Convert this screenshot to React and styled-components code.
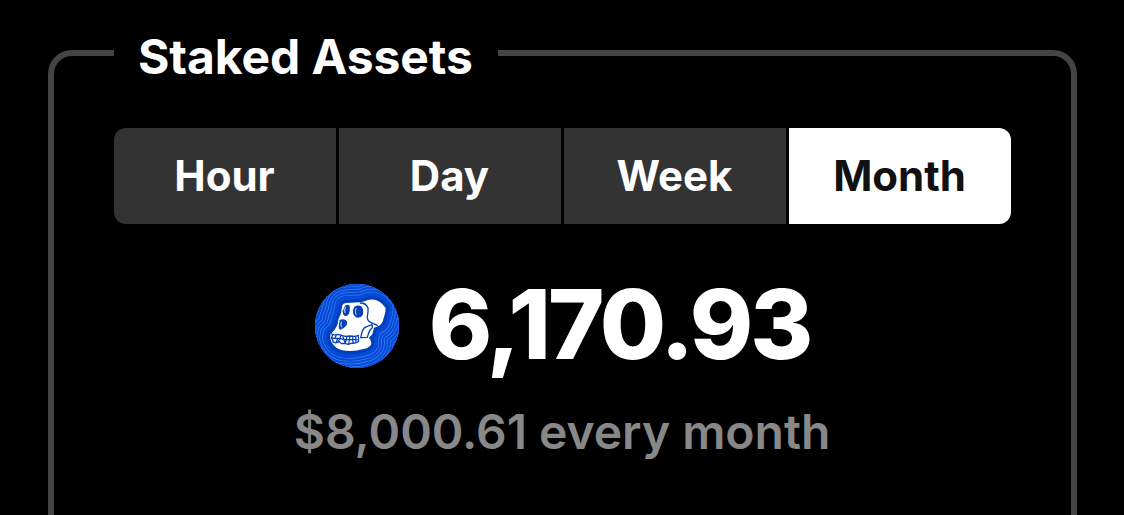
import React, { useState } from 'react';
import styled, { createGlobalStyle } from 'styled-components';

const GlobalStyle = createGlobalStyle`
  * {
    box-sizing: border-box;
  }

  body {
    margin: 0;
    background: #000;
    font-family: Inter, sans-serif;
    overflow: hidden;
  }
`;

const PERIODS = ['Hour', 'Day', 'Week', 'Month'];

const Page = styled.main`
  height: 515px;
  padding: 22px 47px 0 48px;
  overflow: hidden;
`;

const Panel = styled.fieldset`
  height: 560px;
  min-width: 0;
  margin: 0;
  padding: 44px 60px 0;
  border: 6px solid #444;
  border-radius: 24px;
`;

const PanelTitle = styled.legend`
  width: 384px;
  padding: 8px 0 0 24px;
  color: #fff;
  font-size: 48px;
  font-weight: 700;
  line-height: 54px;
  letter-spacing: -0.08px;
  white-space: nowrap;
`;

const Tabs = styled.div`
  display: grid;
  grid-template-columns: repeat(4, 1fr);
  gap: 3px;
  height: 96px;
  border-radius: 12px;
  overflow: hidden;
`;

const Tab = styled.button`
  padding: 0 1px 0 0;
  border: none;
  background: ${({ $active }) => ($active ? '#fff' : '#333')};
  color: ${({ $active }) => ($active ? '#111' : '#fff')};
  font-family: inherit;
  font-size: 42px;
  font-weight: 700;
  line-height: 60px;
  cursor: pointer;
`;

const Amount = styled.div`
  display: flex;
  align-items: center;
  justify-content: center;
  gap: 30px;
  height: 96px;
  margin-top: 54px;
`;

const AmountValue = styled.span`
  padding-bottom: 5px;
  color: #fff;
  font-size: 96px;
  font-weight: 800;
  line-height: 96px;
  letter-spacing: -3px;
`;

const CoinSvg = styled.svg`
  flex: none;
  width: 84px;
  height: 84px;
`;

const Caption = styled.p`
  margin: 22px 0 0;
  padding-right: 1px;
  color: #888;
  font-size: 48px;
  font-weight: 600;
  line-height: 72px;
  letter-spacing: -0.03px;
  text-align: center;
  white-space: nowrap;
`;

const SKULL =
  'M112 91Q115 84 125 84L164 82Q175 81 183 77Q195 72 208 74Q225 77 235 91L242 99Q242 109 238 123L232 142Q227 151 219 154L207 158L202 178L192 188Q201 200 198 209Q191 219 175 222Q145 231 112 226Q93 221 84 208Q78 201 75 189L77 176Q91 166 98 147Q99 132 108 115Z';

// contour widths, widest first so that each one leaves a thin line visible
const CONTOURS = [148, 130, 112, 94, 77, 60, 43];

const ApeCoin = () => (
  <CoinSvg viewBox="30 27 252 252" aria-hidden="true">
    <defs>
      <clipPath id="coin">
        <circle cx="156" cy="153" r="126" />
      </clipPath>
    </defs>
    <g clipPath="url(#coin)" strokeLinejoin="round">
      <rect x="30" y="27" width="252" height="252" fill="#0548d7" />
      {CONTOURS.map((width) => (
        <g key={width} fill="none">
          <path d={SKULL} stroke="#3d7df2" strokeWidth={width + 4} />
          <path d={SKULL} stroke="#064bd8" strokeWidth={width} />
        </g>
      ))}
      <path d={SKULL} fill="#fff" stroke="#0340b8" strokeWidth="20" />
      <path d={SKULL} fill="#fff" />
      <g fill="#0641b6">
        <path d="M120 92Q128 87 133 91Q137 100 132 116Q128 124 119 123Q112 119 113 109Z" />
        <path d="M148 95Q159 89 169 94Q178 105 173 120Q165 132 153 127Q143 121 144 106Z" />
        <path d="M104 135Q112 130 122 135Q131 142 123 153Q114 162 107 164Q99 163 102 149Z" />
      </g>
      <g fill="none" stroke="#fff" strokeWidth="2.5" strokeLinecap="round">
        <path d="M121 97Q117 105 120 113M153 100Q148 109 153 118M109 141Q105 151 109 156" />
      </g>
      <g fill="none" stroke="#0641b6" strokeWidth="4" strokeLinecap="round">
        <path d="M166 84Q183 84 189 99Q190 111 187 125Q187 138 197 142L217 151" />
        <path d="M167 188L172 168Q176 157 187 154L201 149L202 158Q194 164 191 174L187 187Z" />
      </g>
      <g fill="none" stroke="#0641b6" strokeWidth="3.8" strokeLinejoin="round">
        <path d="M78 176L88 180L99 178L110 181L121 184L134 183L150 184L162 181" />
        <path d="M77 189L88 190L103 190L118 194L137 194L158 194" />
        <path d="M82 200L92 204L103 200L109 206L120 205L129 208L139 205L151 204L162 199" />
        <path d="M84 178L79 189L86 200M94 179L90 190L98 191L93 203M108 181L104 192L99 202M113 184L121 205L126 184M135 184L131 207M143 183L144 205M152 183L153 204M160 181L161 199" />
      </g>
    </g>
  </CoinSvg>
);

const StakedAssets = () => {
  const [period, setPeriod] = useState('Month');

  return (
    <Panel>
      <PanelTitle>Staked Assets</PanelTitle>
      <Tabs>
        {PERIODS.map((name) => (
          <Tab key={name} $active={name === period} onClick={() => setPeriod(name)}>
            {name}
          </Tab>
        ))}
      </Tabs>
      <Amount>
        <ApeCoin />
        <AmountValue>6,170.93</AmountValue>
      </Amount>
      <Caption>$8,000.61 every month</Caption>
    </Panel>
  );
};

const App = () => (
  <Page>
    <GlobalStyle />
    <StakedAssets />
  </Page>
);

export default App;
